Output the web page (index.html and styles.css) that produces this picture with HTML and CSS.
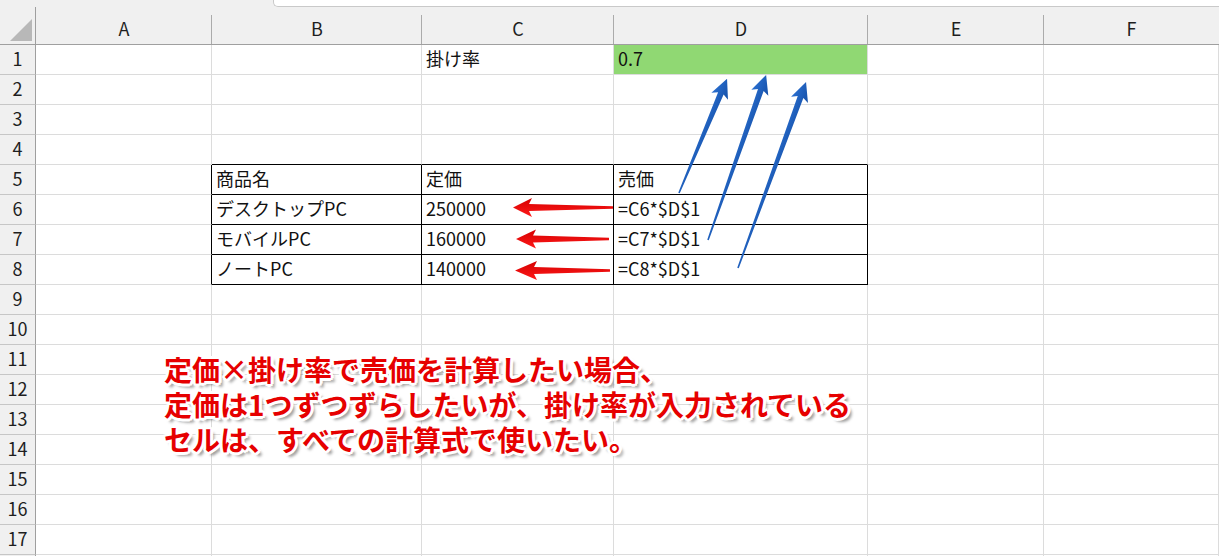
FILE: index.html
```html
<!DOCTYPE html>
<html lang="ja">
<head>
<meta charset="utf-8">
<link rel="stylesheet" href="styles.css">
</head>
<body>
<div class="sheet">
  <div class="topstrip"><div class="spacer"></div><div class="namebox"></div></div>
  <div class="grid">
    <div class="corner"><span class="tri"></span></div>
    <div class="ch">A</div><div class="ch">B</div><div class="ch">C</div><div class="ch">D</div><div class="ch">E</div><div class="ch last">F</div>

    <div class="rh">1</div><div class="c"></div><div class="c"></div><div class="c">掛け率</div><div class="c green">0.7</div><div class="c"></div><div class="c"></div>
    <div class="rh">2</div><div class="c"></div><div class="c"></div><div class="c"></div><div class="c"></div><div class="c"></div><div class="c"></div>
    <div class="rh">3</div><div class="c"></div><div class="c"></div><div class="c"></div><div class="c"></div><div class="c"></div><div class="c"></div>
    <div class="rh">4</div><div class="c"></div><div class="c tb-b"></div><div class="c tb-b"></div><div class="c tb-b"></div><div class="c"></div><div class="c"></div>
    <div class="rh">5</div><div class="c tb-r"></div><div class="c tb">商品名</div><div class="c tb">定価</div><div class="c tb">売価</div><div class="c"></div><div class="c"></div>
    <div class="rh">6</div><div class="c tb-r"></div><div class="c tb">デスクトップPC</div><div class="c tb">250000</div><div class="c tb">=C6*$D$1</div><div class="c"></div><div class="c"></div>
    <div class="rh">7</div><div class="c tb-r"></div><div class="c tb">モバイルPC</div><div class="c tb">160000</div><div class="c tb">=C7*$D$1</div><div class="c"></div><div class="c"></div>
    <div class="rh">8</div><div class="c tb-r"></div><div class="c tb">ノートPC</div><div class="c tb">140000</div><div class="c tb">=C8*$D$1</div><div class="c"></div><div class="c"></div>
    <div class="rh">9</div><div class="c"></div><div class="c"></div><div class="c"></div><div class="c"></div><div class="c"></div><div class="c"></div>
    <div class="rh">10</div><div class="c"></div><div class="c"></div><div class="c"></div><div class="c"></div><div class="c"></div><div class="c"></div>
    <div class="rh">11</div><div class="c"></div><div class="c"></div><div class="c"></div><div class="c"></div><div class="c"></div><div class="c"></div>
    <div class="rh">12</div><div class="c"></div><div class="c"></div><div class="c"></div><div class="c"></div><div class="c"></div><div class="c"></div>
    <div class="rh">13</div><div class="c"></div><div class="c"></div><div class="c"></div><div class="c"></div><div class="c"></div><div class="c"></div>
    <div class="rh">14</div><div class="c"></div><div class="c"></div><div class="c"></div><div class="c"></div><div class="c"></div><div class="c"></div>
    <div class="rh">15</div><div class="c"></div><div class="c"></div><div class="c"></div><div class="c"></div><div class="c"></div><div class="c"></div>
    <div class="rh">16</div><div class="c"></div><div class="c"></div><div class="c"></div><div class="c"></div><div class="c"></div><div class="c"></div>
    <div class="rh">17</div><div class="c"></div><div class="c"></div><div class="c"></div><div class="c"></div><div class="c"></div><div class="c"></div>
    <div class="rh"></div><div class="c"></div><div class="c"></div><div class="c"></div><div class="c"></div><div class="c"></div><div class="c"></div>
  </div>

  <svg class="arrows" width="1219" height="556" viewBox="0 0 1219 556" xmlns="http://www.w3.org/2000/svg">
    <defs>
      <linearGradient id="bl" x1="0" y1="0" x2="0" y2="1">
        <stop offset="0" stop-color="#2a6fd0"/>
        <stop offset="1" stop-color="#1550a8"/>
      </linearGradient>
      <linearGradient id="rd" x1="0" y1="0" x2="0" y2="1">
        <stop offset="0" stop-color="#ff1a1a"/>
        <stop offset="1" stop-color="#d40000"/>
      </linearGradient>
    </defs>
    <g fill="url(#bl)">
      <polygon transform="translate(679,193) rotate(-67.2)" points="0,-0.8 108,-3 105,-9 124,0 105,9 108,3 0,0.8"/>
      <polygon transform="translate(708,240) rotate(-70.6)" points="0,-0.8 159,-3 156,-9 175,0 156,9 159,3 0,0.8"/>
      <polygon transform="translate(738,268) rotate(-69.9)" points="0,-0.8 182,-3 179,-9 198,0 179,9 182,3 0,0.8"/>
    </g>
    <g fill="url(#rd)">
      <polygon transform="translate(613,207.5) rotate(180)" points="0,-1.3 84,-3.6 81,-9.5 100,0 81,9.5 84,3.6 0,1.3"/>
      <polygon transform="translate(609,239) rotate(180)" points="0,-1.3 76,-3.6 73,-9.5 93,0 73,9.5 76,3.6 0,1.3"/>
      <polygon transform="translate(610,270.5) rotate(180)" points="0,-1.3 76,-3.6 73,-9.5 95,0 73,9.5 76,3.6 0,1.3"/>
    </g>
  </svg>

  <div class="note">
    <p>定価×掛け率で売価を計算したい場合、</p>
    <p>定価は1つずつずらしたいが、掛け率が入力されている</p>
    <p>セルは、すべての計算式で使いたい。</p>
  </div>
</div>
</body>
</html>
```

FILE: styles.css
```css
html, body {
  margin: 0;
  padding: 0;
  background: #ffffff;
}
body {
  width: 1219px;
  height: 556px;
  overflow: hidden;
  font-family: "Noto Sans CJK JP", "Noto Sans", sans-serif;
}
.sheet {
  position: relative;
  width: 1219px;
  height: 556px;
  overflow: hidden;
}
.topstrip {
  display: flex;
  height: 7px;
  background: #f0f0f0;
}
.spacer {
  width: 273px;
  flex: none;
}
.namebox {
  flex: 1;
  background: #ffffff;
  border-left: 1px solid #c9c9c9;
  border-bottom: 1px solid #c9c9c9;
  border-bottom-left-radius: 5px;
  box-sizing: border-box;
}
.grid {
  display: grid;
  grid-template-columns: 36px 176px 210px 192px 254px 176px 175px;
  grid-template-rows: 38px repeat(18, 30px);
}
.corner {
  background: #f0f0f0;
  border-bottom: 1px solid #9f9f9f;
  border-right: 1px solid #9f9f9f;
  box-sizing: border-box;
  display: flex;
  align-items: flex-end;
  justify-content: flex-end;
  padding: 0 3px 3px 0;
}
.tri {
  width: 0;
  height: 0;
  border-left: 22px solid transparent;
  border-bottom: 22px solid #b8b8b8;
}
.ch {
  background-color: #f0f0f0;
  background-image: linear-gradient(#ababab, #ababab);
  background-size: 1px 29px;
  background-position: right bottom;
  background-repeat: no-repeat;
  border-bottom: 1px solid #9f9f9f;
  box-sizing: border-box;
  display: flex;
  align-items: center;
  justify-content: center;
  padding-top: 5px;
  font-size: 18px;
  color: #1e1e1e;
}
.ch.last {
  background-image: none;
}
.rh {
  background: #f0f0f0;
  border-right: 1px solid #9f9f9f;
  border-bottom: 1px solid #c6c6c6;
  box-sizing: border-box;
  display: flex;
  align-items: center;
  justify-content: center;
  padding-bottom: 3px;
  font-size: 18px;
  color: #1e1e1e;
}
.c {
  border-right: 1px solid #dcdcdc;
  border-bottom: 1px solid #dcdcdc;
  box-sizing: border-box;
  display: flex;
  align-items: center;
  padding-left: 4px;
  padding-bottom: 3px;
  font-size: 18px;
  color: #111;
  white-space: nowrap;
}
.green {
  background: #90d873;
}
.tb {
  border-right-color: #000;
  border-bottom-color: #000;
}
.tb-b {
  border-bottom-color: #000;
}
.tb-r {
  border-right-color: #000;
}
.arrows {
  position: absolute;
  left: 0;
  top: 0;
  pointer-events: none;
}
.note {
  position: absolute;
  left: 164px;
  top: 352px;
  color: #e60000;
  font-weight: 700;
  font-size: 28px;
  line-height: 35px;
  white-space: nowrap;
  text-shadow:
    2px 0 0 #fff, -2px 0 0 #fff, 0 2px 0 #fff, 0 -2px 0 #fff,
    2px 2px 0 #fff, -2px -2px 0 #fff, 2px -2px 0 #fff, -2px 2px 0 #fff,
    3px 0 0 #fff, 0 3px 0 #fff, -3px 0 0 #fff, 0 -3px 0 #fff,
    4px 4px 3px rgba(0,0,0,0.4);
}
.note p {
  margin: 0;
}
```
